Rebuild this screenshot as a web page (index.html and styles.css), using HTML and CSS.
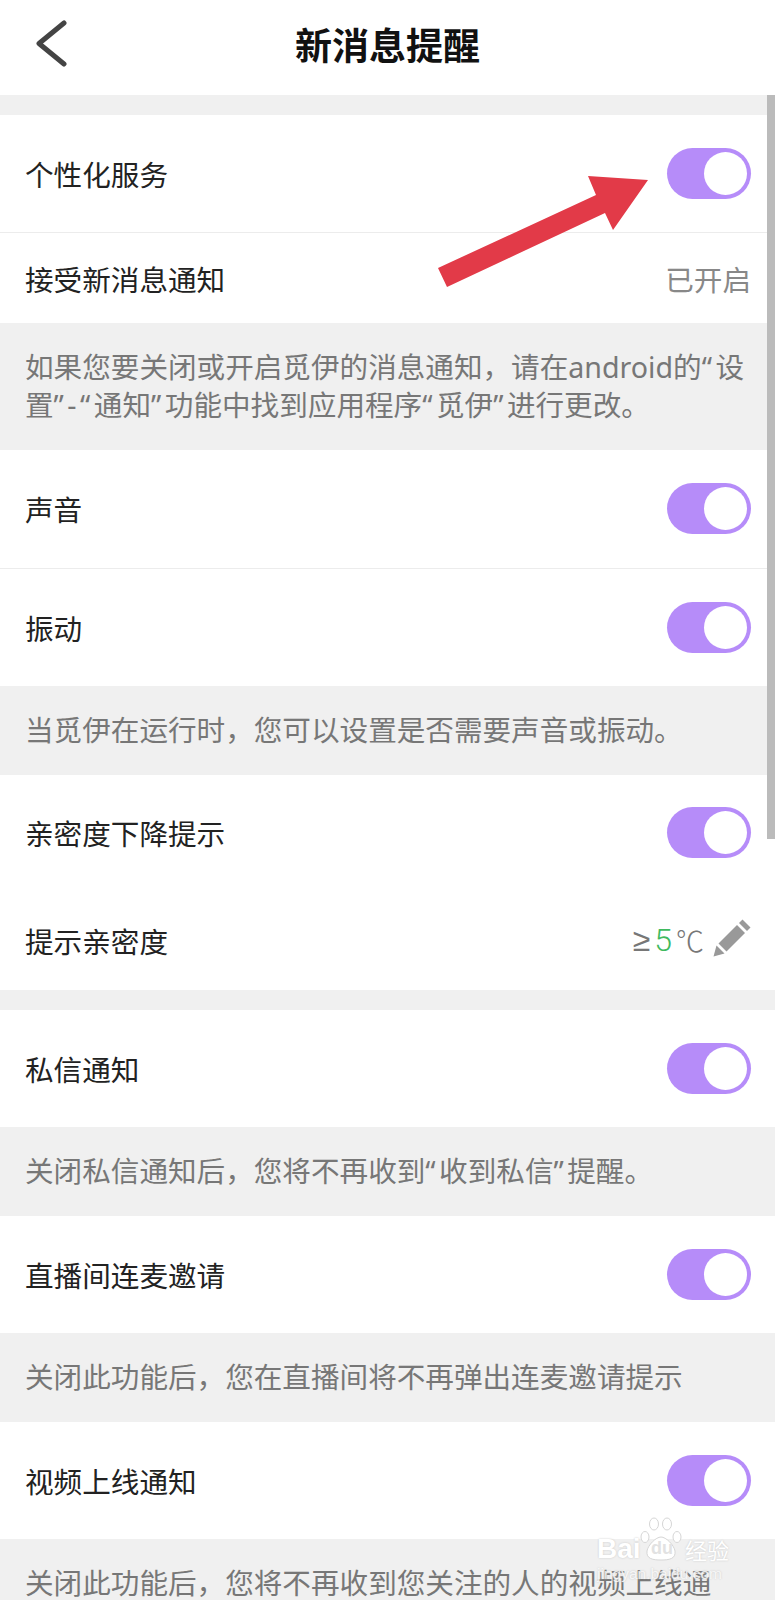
FILE: index.html
```html
<!DOCTYPE html>
<html lang="zh-CN">
<head>
    <meta charset="UTF-8">
    <title>新消息提醒</title>
    <link rel="stylesheet" href="styles.css">
</head>
<body>
    <div class="screen">
        <header class="top-bar">
            <svg class="back-icon" width="40" height="50" viewBox="0 0 40 50">
                <path d="M31 3 L6 23.5 L31 44" />
            </svg>
            <h1>新消息提醒</h1>
        </header>

        <div class="spacer"></div>

        <div class="row row-tall row-line">
            <span>个性化服务</span>
            <div class="switch"></div>
        </div>
        <div class="row row-short">
            <span>接受新消息通知</span>
            <span class="row-value">已开启</span>
        </div>
        <p class="note">如果您要关闭或开启觅伊的消息通知，请在android的<span class="q">“</span>设置<span class="q">”-“</span>通知<span class="q">”</span>功能中找到应用程序<span class="q">“</span>觅伊<span class="q">”</span>进行更改。</p>

        <div class="row row-tall row-line row-sound">
            <span>声音</span>
            <div class="switch"></div>
        </div>
        <div class="row row-tall">
            <span>振动</span>
            <div class="switch"></div>
        </div>
        <p class="note">当觅伊在运行时，您可以设置是否需要声音或振动。</p>

        <div class="row row-intimacy">
            <span>亲密度下降提示</span>
            <div class="switch"></div>
        </div>
        <div class="row row-level">
            <span>提示亲密度</span>
            <div class="level">
                <span class="level-sign">≥</span>
                <span class="level-num">5</span>
                <span class="level-unit">℃</span>
                <svg class="pencil" width="38" height="38" viewBox="0 0 38 38">
                    <path d="M0.5 37.5 L3.5 26.5 L11.5 34.5 Z" />
                    <path d="M5.5 24.5 L24 6 L32 14 L13.5 32.5 Z" />
                    <path d="M26 4 L29.5 0.5 L37.5 8.5 L34 12 Z" />
                </svg>
            </div>
        </div>

        <div class="spacer"></div>

        <div class="row row-tall">
            <span>私信通知</span>
            <div class="switch"></div>
        </div>
        <p class="note">关闭私信通知后，您将不再收到<span class="q">“</span>收到私信<span class="q">”</span>提醒。</p>

        <div class="row row-tall">
            <span>直播间连麦邀请</span>
            <div class="switch"></div>
        </div>
        <p class="note">关闭此功能后，您在直播间将不再弹出连麦邀请提示</p>

        <div class="row row-tall">
            <span>视频上线通知</span>
            <div class="switch"></div>
        </div>
        <p class="note note-last">关闭此功能后，您将不再收到您关注的人的视频上线通</p>

        <!-- scrollbar, arrow and watermark sit on top of the list -->
        <div class="scrollbar"></div>

        <svg class="arrow" width="220" height="125" viewBox="0 0 220 125">
            <polygon points="210,14 175,64 167,47 9,121 0,102 158,29 150,10" />
        </svg>

        <div class="watermark">
            <div class="mark-name">
                <span class="mark-bai">Bai</span>
                <div class="mark-paw">
                    <svg width="42" height="44" viewBox="0 0 42 44">
                        <ellipse cx="5" cy="20" rx="4" ry="5.5" />
                        <ellipse cx="14" cy="7" rx="4.5" ry="6" />
                        <ellipse cx="27" cy="7" rx="4.5" ry="6" />
                        <ellipse cx="37" cy="20" rx="4" ry="5.5" />
                        <path d="M21 20 C16 20 8 28 7 34 C6 42 13 43 21 43 C29 43 36 42 35 34 C34 28 26 20 21 20 Z" />
                    </svg>
                    <span class="mark-du">du</span>
                </div>
                <span class="mark-cn">经验</span>
            </div>
            <div class="mark-url">jingyan.baidu.com</div>
        </div>
    </div>
</body>
</html>
```

FILE: styles.css
```css
* {
    box-sizing: border-box;
}

body {
    margin: 0;
    font-family: "Noto Sans", "Noto Sans CJK SC", sans-serif;
    background: #f0f0f0;
    color: #222;
}

.screen {
    position: relative;
    width: 775px;
    height: 1600px;
    overflow: hidden;
    background: #f0f0f0;
}

.top-bar {
    display: flex;
    align-items: center;
    justify-content: center;
    position: relative;
    height: 95px;
    background: #fff;
}

.top-bar h1 {
    margin: 0 0 8px;
    font-size: 37px;
    font-weight: 700;
    color: #111;
}

.back-icon {
    position: absolute;
    left: 33px;
    top: 20px;
}

.back-icon path {
    fill: none;
    stroke: #444;
    stroke-width: 5;
    stroke-linecap: round;
    stroke-linejoin: round;
}

.spacer {
    height: 20px;
}

.row {
    display: flex;
    align-items: center;
    justify-content: space-between;
    padding: 0 24px 0 25px;
    background: #fff;
    font-size: 28.6px;
}

.row-tall {
    height: 117px;
}

.row-short {
    height: 90px;
}

.row-line {
    height: 118px;
    border-bottom: 1px solid #ececec;
}

.row-sound {
    height: 119px;
    padding-bottom: 1px;
}

.row-intimacy {
    height: 115px;
}

.row-level {
    height: 100px;
}

.row-value {
    color: #888;
}

.switch {
    position: relative;
    width: 84px;
    height: 51px;
    border-radius: 26px;
    background: #b68cf9;
}

.switch::after {
    content: "";
    position: absolute;
    right: 4px;
    top: 4px;
    width: 43px;
    height: 43px;
    border-radius: 50%;
    background: #fff;
}

.note {
    margin: 0;
    padding: 25px 26px 26px 25px;
    font-size: 28.6px;
    line-height: 38px;
    color: #777;
}

.note-last {
    padding-top: 27px;
    padding-bottom: 0;
    line-height: 33px;
}

/* quotes are a little wider in the app font */
.q {
    display: inline-block;
    line-height: 1;
    letter-spacing: 3.5px;
}

.level {
    display: flex;
    align-items: center;
    color: #777;
}

.level-sign {
    font-family: "Liberation Sans", sans-serif;
    font-size: 32px;
    margin-right: 4px;
}

.level-num {
    font-family: Roboto, sans-serif;
    font-weight: 300;
    font-size: 32px;
    color: #3fba5f;
    margin-right: 4px;
}

.level-unit {
    font-family: "Noto Sans CJK SC", sans-serif;
    font-weight: 300;
    font-size: 28px;
    margin-right: 9px;
}

.pencil {
    display: block;
    margin-top: -4px;
    fill: #999;
}

.scrollbar {
    position: absolute;
    right: 0;
    top: 95px;
    width: 8px;
    height: 744px;
    background: #bbb;
}

.arrow {
    position: absolute;
    left: 438px;
    top: 166px;
    fill: #e23a48;
}

.watermark {
    position: absolute;
    left: 597px;
    top: 1538px;
    width: 140px;
    color: #fff;
    text-shadow: 0 0 2px #c4c4c4;
}

.mark-name {
    display: flex;
    align-items: center;
    height: 22px;
}

.mark-bai {
    width: 43px;
    font-family: "Liberation Sans", sans-serif;
    font-size: 28px;
    font-weight: 700;
}

.mark-paw {
    position: relative;
    width: 42px;
    height: 22px;
    margin-right: 3px;
}

.mark-paw svg {
    position: absolute;
    left: 0;
    top: -21px;
    fill: #fff;
    stroke: #d6d6d6;
}

.mark-du {
    position: absolute;
    left: 11px;
    top: -1px;
    font-family: "Liberation Sans", sans-serif;
    font-size: 18px;
    font-weight: 700;
    line-height: 22px;
    color: #e2e2e2;
    text-shadow: none;
}

.mark-cn {
    font-family: "Noto Sans CJK SC", sans-serif;
    font-size: 22px;
    line-height: 22px;
    white-space: nowrap;
}

.mark-url {
    margin-top: 6px;
    font-family: "Liberation Sans", sans-serif;
    font-size: 15.5px;
    line-height: 16px;
    color: rgba(255, 255, 255, 0.8);
    white-space: nowrap;
}
```
